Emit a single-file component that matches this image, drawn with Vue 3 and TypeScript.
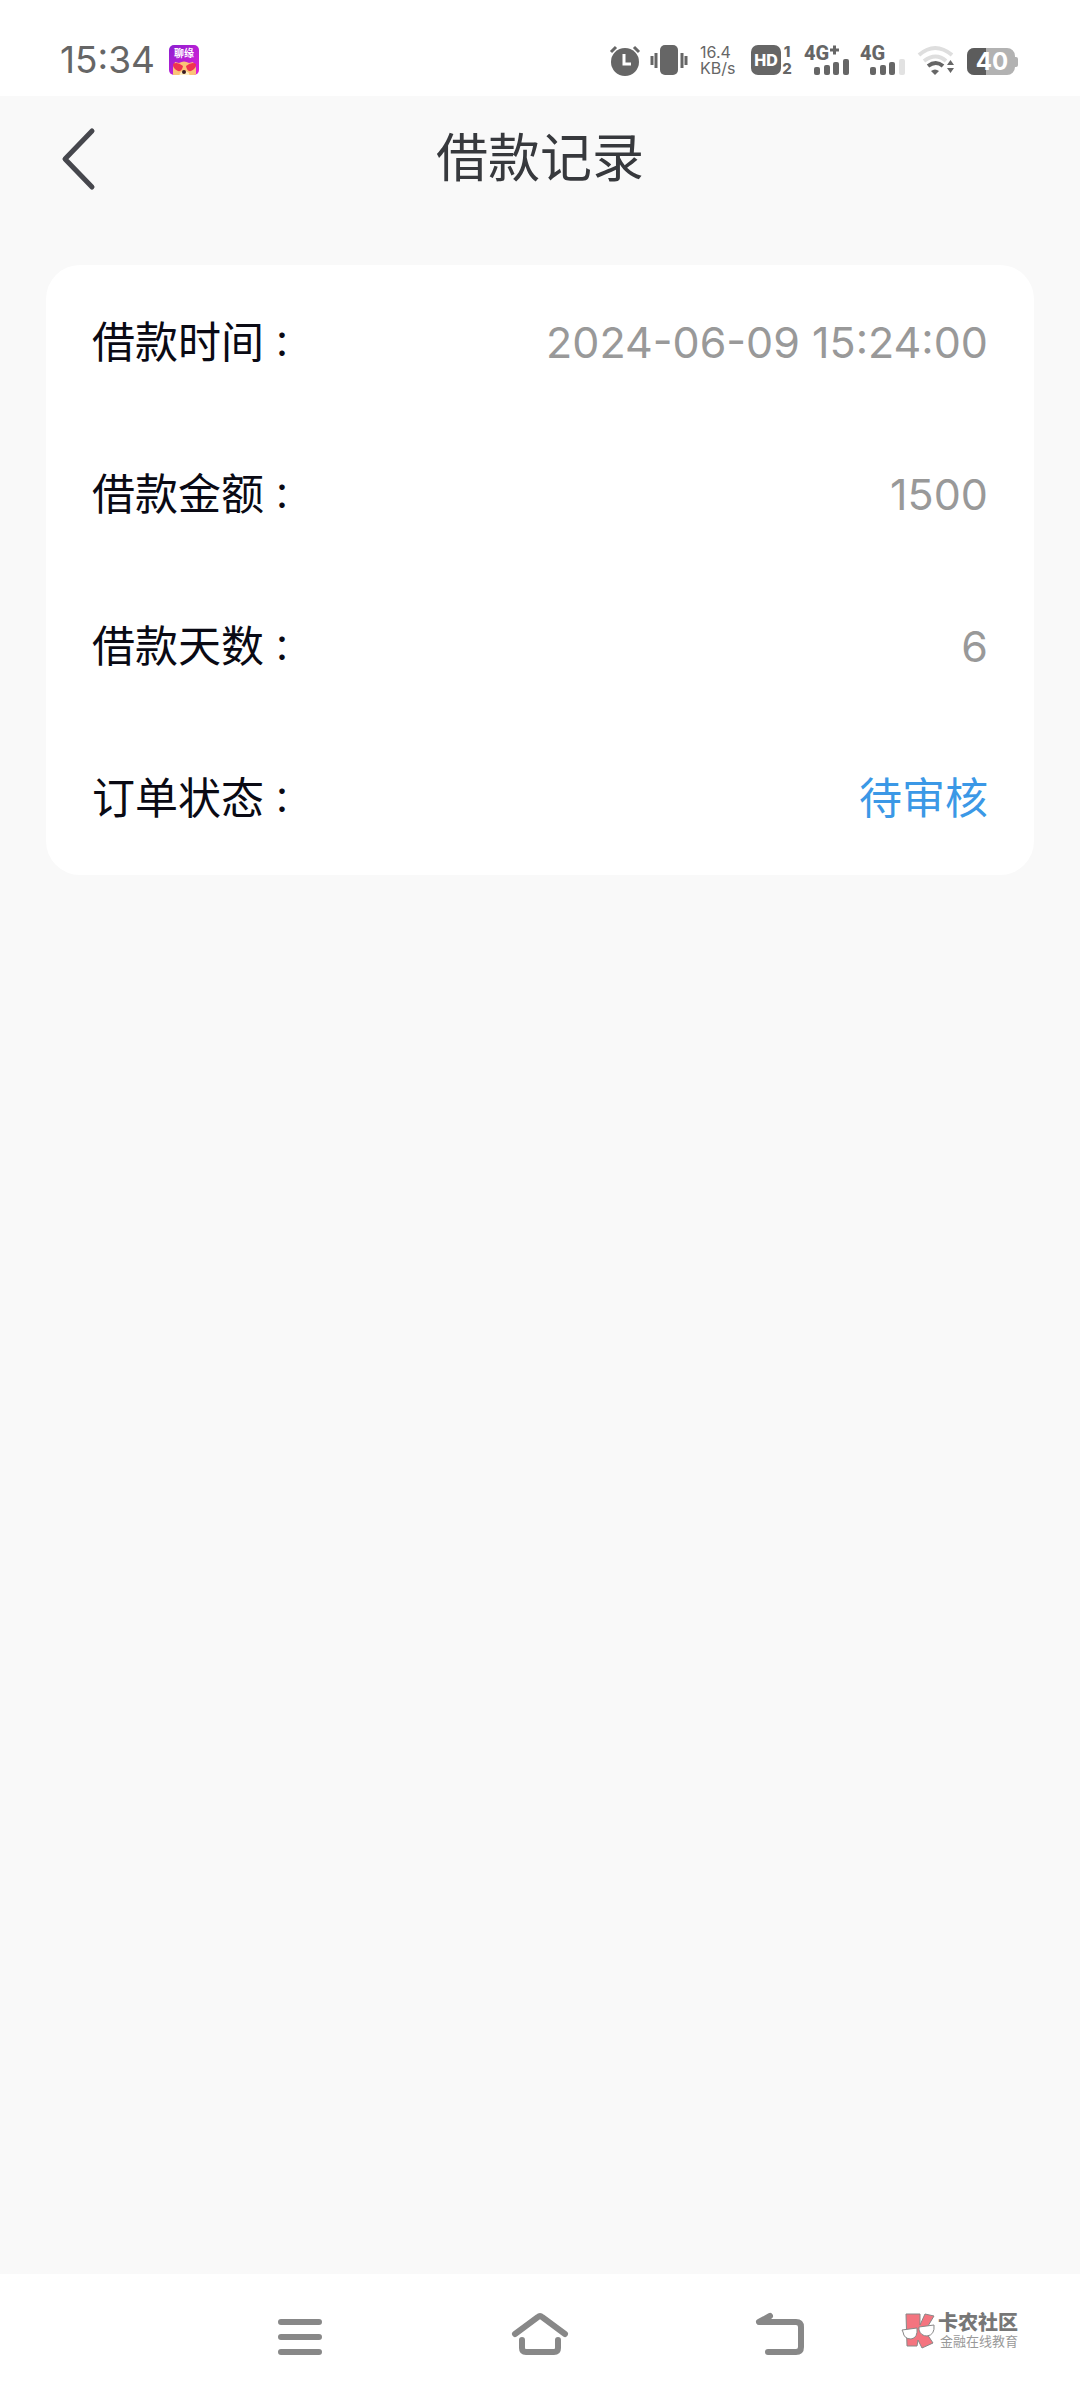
<script setup lang="ts">
interface RecordRow {
  label: string
  value: string
  highlight?: boolean
}

const rows: RecordRow[] = [
  { label: '借款时间', value: '2024-06-09 15:24:00' },
  { label: '借款金额', value: '1500' },
  { label: '借款天数', value: '6' },
  { label: '订单状态', value: '待审核', highlight: true },
]
</script>

<template>
  <div class="screen">
    <div class="status-bar">
      <div class="status-left">
        <span class="clock">15:34</span>
        <svg class="app-badge" width="32" height="32" viewBox="0 0 32 32">
          <defs>
            <linearGradient id="badge" x1="0" y1="0" x2="1" y2="1">
              <stop offset="0" stop-color="#8a1fd0" />
              <stop offset="1" stop-color="#e21fd8" />
            </linearGradient>
            <clipPath id="badge-clip"><rect x="1" y="1" width="30" height="30" rx="5" /></clipPath>
          </defs>
          <rect x="1" y="1" width="30" height="30" rx="5" fill="url(#badge)" />
          <g clip-path="url(#badge-clip)">
            <path d="M5 34V24l2-6 4 1q5-3 10 0l4-1 3 6v10z" fill="#fbc477" />
            <path d="M5 20q4-3 10 2-1 6-5 5-5-2-5-7zM28 20q-4-3-10 2 1 6 5 5 5-2 5-7z" fill="#f0344f" />
            <path d="M12 29q4-4 9 0l1 4H11z" fill="#fff0c4" />
            <circle cx="16" cy="28" r="2" fill="#3a1a20" />
          </g>
          <text x="16" y="13" text-anchor="middle" class="badge-text">聊缘</text>
        </svg>
      </div>
      <div class="status-right">
        <svg width="30" height="32" viewBox="1 0 30 32">
          <circle cx="16" cy="18" r="14" fill="#666" />
          <path d="M2 8l5-5M30 8l-5-5" stroke="#666" stroke-width="3" fill="none" />
          <path d="M15 10v10h7" stroke="#fff" stroke-width="3" fill="none" />
        </svg>
        <svg width="40" height="32" viewBox="0 0 40 32">
          <rect x="10" y="1" width="18" height="30" rx="5" fill="#666" />
          <path d="M2 12v9M6 9v15M32 9v15M36 12v9" stroke="#666" stroke-width="3" />
        </svg>
        <div class="net-speed"><span>16.4</span><span>KB/s</span></div>
        <svg width="44" height="32" viewBox="0 0 44 32">
          <rect x="1" y="1" width="30" height="30" rx="7" fill="#666" />
          <text x="16" y="22" text-anchor="middle" class="hd-text">HD</text>
          <text x="37" y="13" text-anchor="middle" class="sim-text">1</text>
          <text x="37" y="30" text-anchor="middle" class="sim-text">2</text>
        </svg>
        <svg width="46" height="32" viewBox="0 0 46 32">
          <text x="0" y="16" class="signal-text">4G</text>
          <path d="M26 6h9M30.500 1.500v9" stroke="#666" stroke-width="3" />
          <g fill="#666">
            <rect x="10" y="23" width="6" height="8" rx="2" />
            <rect x="20" y="21" width="6" height="10" rx="2" />
            <rect x="29" y="18" width="6" height="13" rx="2" />
            <rect x="39" y="15" width="6" height="16" rx="2" />
          </g>
        </svg>
        <svg width="46" height="32" viewBox="0 0 46 32">
          <text x="0" y="16" class="signal-text">4G</text>
          <g fill="#666">
            <rect x="10" y="23" width="6" height="8" rx="2" />
            <rect x="20" y="21" width="6" height="10" rx="2" />
            <rect x="29" y="18" width="6" height="13" rx="2" />
            <rect x="39" y="15" width="6" height="16" rx="2" fill="#e2e2e2" />
          </g>
        </svg>
        <svg width="38" height="32" viewBox="0 0 38 32">
          <path d="M3 11q16-14 33 0" stroke="#dedede" stroke-width="4" fill="none" />
          <path d="M8 17q12-9 22 0" stroke="#dedede" stroke-width="4" fill="none" />
          <path d="M12 22q8-6 15 0" stroke="#666" stroke-width="4" fill="none" />
          <path d="M15 27q4-3 8 0l-4 4z" fill="#666" />
          <path d="M31 21l3.500-5 3.500 5zM31 24l3.500 5 3.500-5z" fill="#666" />
        </svg>
        <svg width="56" height="32" viewBox="0 0 56 32">
          <path d="M10 4h33a8 8 0 0 1 8 8v1h1q2 0 2 2v6q0 2-2 2h-1a8 8 0 0 1-8 8H10a7 7 0 0 1-7-7V11a7 7 0 0 1 7-7z" fill="#b2b2b2" />
          <path d="M22 4H10a7 7 0 0 0-7 7v13a7 7 0 0 0 7 7h12z" fill="#5c5c5c" />
          <text x="28" y="26" text-anchor="middle" class="battery-text">40</text>
        </svg>
      </div>
    </div>

    <header class="title-bar">
      <button class="back" type="button" aria-label="返回">
        <svg width="36" height="64" viewBox="0 0 36 64">
          <path d="M32 4L5 32l27 28" fill="none" stroke="#46474d" stroke-width="5" stroke-linecap="round" stroke-linejoin="round" />
        </svg>
      </button>
      <h1>借款记录</h1>
    </header>

    <main>
      <dl class="card">
        <div v-for="row in rows" :key="row.label" class="row">
          <dt>{{ row.label }}<span class="colon">：</span></dt>
          <dd :class="{ highlight: row.highlight }">{{ row.value }}</dd>
        </div>
      </dl>
    </main>

    <nav class="nav-bar">
      <button type="button" aria-label="最近任务">
        <svg width="60" height="48" viewBox="0 0 60 48">
          <path d="M11 9h38M11 24h38M11 39h38" stroke="#888" stroke-width="6" stroke-linecap="round" />
        </svg>
      </button>
      <button type="button" aria-label="主页">
        <svg width="60" height="48" viewBox="0 0 60 48">
          <path d="M5 21L28 4q2-2 4 0l23 17M12 27v8q0 4 4 4h28q4 0 4-4v-8" fill="none" stroke="#888" stroke-width="6" stroke-linecap="round" />
        </svg>
      </button>
      <button type="button" aria-label="返回上一页">
        <svg width="60" height="48" viewBox="0 0 60 48">
          <path d="M20 3L9 9h37q5 0 5 5v20q0 5-5 5H18" fill="none" stroke="#888" stroke-width="6" stroke-linecap="round" stroke-linejoin="round" />
        </svg>
      </button>
      <div class="watermark">
        <svg width="36" height="36" viewBox="0 0 36 36">
          <path d="M5 1h14v11l5-11 9 2-9 15 8 12-11 5-4-8-1 6H6z" fill="#f4747f" stroke="#888" stroke-width="1" />
          <path d="M1 17l15-2q1 10-6 11-7 0-8-7zM18 14l15-2q1 10-7 11-6 0-8-6z" fill="#fff" stroke="#888" stroke-width="1" />
        </svg>
        <div class="watermark-text">
          <strong>卡农社区</strong>
          <small>金融在线教育</small>
        </div>
      </div>
    </nav>
  </div>
</template>

<style>
body {
  margin: 0;
}
</style>

<style scoped>
.screen {
  min-height: 100vh;
  display: flex;
  flex-direction: column;
  background: #f9f9f9;
  font-family: Inter, "Noto Sans CJK SC", sans-serif;
}

svg {
  display: block;
  flex: none;
  overflow: visible;
}

button {
  padding: 0;
  border: 0;
  background: none;
}

.status-bar {
  height: 96px;
  padding: 44px 60px 0;
  box-sizing: border-box;
  background: #fff;
  display: flex;
  justify-content: space-between;
  align-items: flex-start;
}

.status-left,
.status-right {
  display: flex;
}

.status-left {
  gap: 13px;
}

.status-right {
  gap: 10px;
}

.clock {
  font-size: 37px;
  line-height: 32px;
  color: #666;
}

.net-speed {
  width: 40px;
  display: flex;
  flex-direction: column;
  font-size: 16px;
  line-height: 16px;
  color: #666;
}

.badge-text {
  font-size: 10px;
  font-weight: 700;
  fill: #fff;
}

.hd-text {
  font-size: 16px;
  font-weight: 800;
  fill: #fff;
}

.sim-text {
  font-size: 15px;
  font-weight: 800;
  fill: #666;
}

.signal-text {
  font-family: Roboto, sans-serif;
  font-size: 20px;
  font-weight: 800;
  fill: #666;
}

.battery-text {
  font-size: 24px;
  font-weight: 700;
  fill: #fff;
}

.title-bar {
  height: 126px;
  display: grid;
  grid-template-columns: 1fr auto 1fr;
  align-items: center;
  padding: 0 60px;
}

.back {
  justify-self: start;
}

h1 {
  margin: 0;
  font-size: 52px;
  line-height: 72px;
  font-weight: 400;
  color: #37393d;
}

main {
  flex: 1;
  padding: 43px 46px;
}

.card {
  margin: 0;
  padding: 1px 46px;
  border-radius: 34px;
  background: #fff;
}

.row {
  height: 152px;
  display: flex;
  align-items: center;
  justify-content: space-between;
  font-size: 43px;
  line-height: 56px;
}

dt {
  color: #0a0a14;
}

.colon {
  font-family: "Noto Sans CJK TC", sans-serif;
  font-size: 36px;
}

dd {
  margin: 0;
  color: #999;
}

.highlight {
  color: #3b98e6;
}

.nav-bar {
  position: relative;
  height: 126px;
  background: #fff;
  display: flex;
  align-items: center;
  justify-content: center;
  gap: 180px;
}

.watermark {
  position: absolute;
  right: 62px;
  top: 39px;
  display: flex;
  gap: 1px;
}

.watermark-text {
  display: flex;
  flex-direction: column;
  color: #777;
}

.watermark-text strong {
  font-size: 20px;
  line-height: 20px;
  font-weight: 900;
}

.watermark-text small {
  padding-left: 2px;
  font-size: 13px;
  line-height: 16px;
  color: #999;
}
</style>
